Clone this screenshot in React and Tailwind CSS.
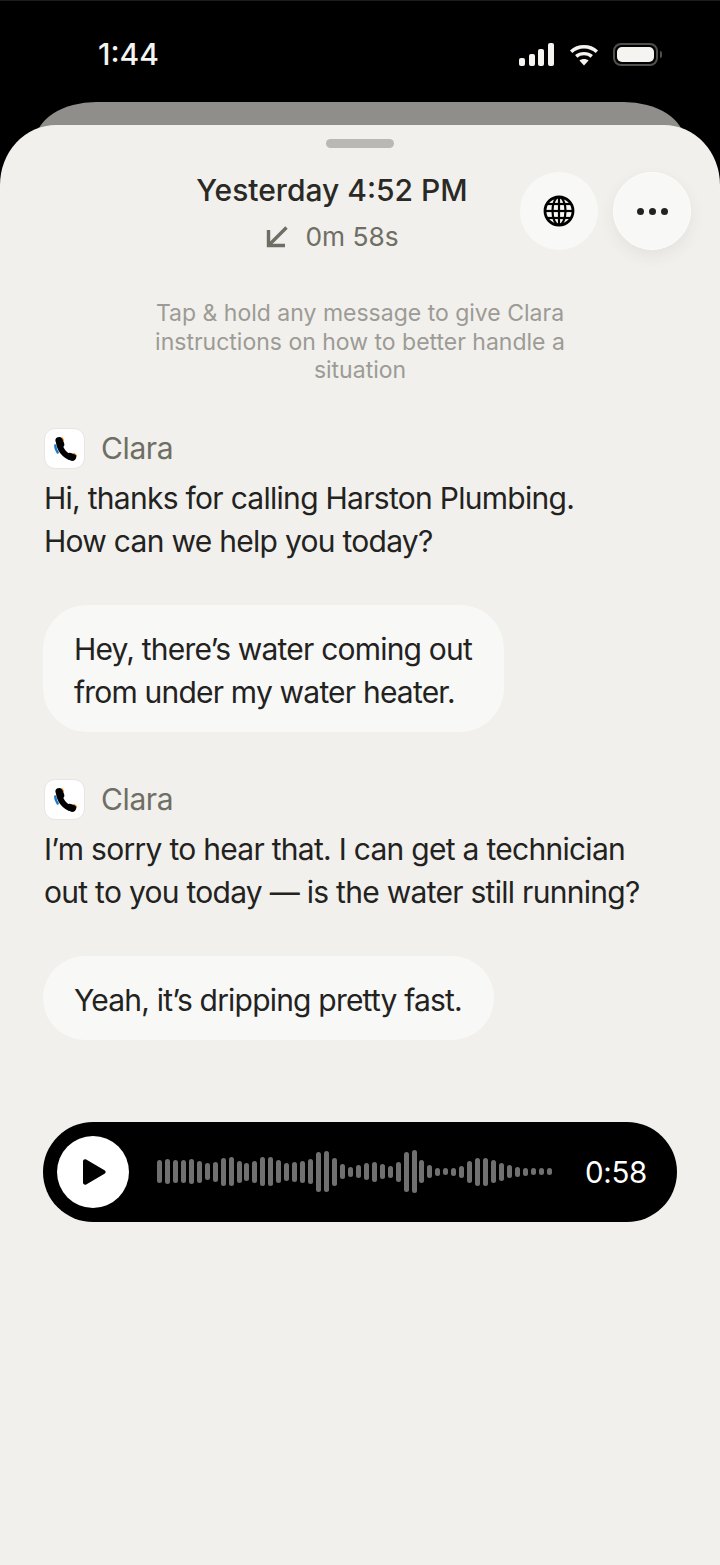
const bars = [23, 25, 23, 23, 25, 22, 17, 20, 28, 29, 22, 18, 22, 29, 29, 23, 18, 20, 22, 25, 40, 41, 28, 15, 10, 13, 17, 20, 15, 12, 20, 40, 43, 23, 13, 8, 7, 8, 12, 22, 28, 28, 23, 18, 13, 10, 8, 7, 7, 7];

function ClaraLabel() {
  return (
    <div className="flex items-center gap-4">
      <div className="flex h-[41px] w-[41px] items-center justify-center rounded-[11px] border border-[#e6e5e1] bg-white">
        <svg width="39" height="39" viewBox="0 0 40 40" fill="none" strokeLinecap="round">
          <path d="M10.5 17C10.5 19.5 11.5 22 13 24" stroke="#1d78c9" strokeWidth="2.5" />
          <path d="M17.5 9.5L18.5 11.5" stroke="#f0982c" strokeWidth="2" />
          <path d="M30 25.5L32 27.5" stroke="#f0982c" strokeWidth="2" />
          <path d="M14.5 13C14.5 20 20 28 28 29.5" stroke="#000" strokeWidth="6" />
          <path d="M14.5 12L16 15.5" stroke="#000" strokeWidth="7.5" />
          <path d="M25.5 28L28.5 29" stroke="#000" strokeWidth="7" />
        </svg>
      </div>
      <span className="text-[30px] leading-[41px] tracking-[-0.4px] text-[#6f6e64]">Clara</span>
    </div>
  );
}

function AgentMessage({ children }) {
  return (
    <div>
      <ClaraLabel />
      <p className="mt-2 text-[30px] leading-[43px] tracking-[-0.72px] text-[#23221e]">{children}</p>
    </div>
  );
}

function CallerBubble({ children }) {
  return (
    <div className="w-fit rounded-[44px] bg-[#f8f8f7] pb-[18px] pl-[31px] pr-[32px] pt-[23px] text-[30px] leading-[43px] tracking-[-0.8px] text-[#23221e]">
      {children}
    </div>
  );
}

export default function App() {
  return (
    <div className="flex h-[1565px] w-[720px] flex-col overflow-hidden bg-black font-['Inter',sans-serif]">
      {/* Status bar */}
      <div className="flex h-[102px] shrink-0 items-start justify-between border-t border-[#1c1c1c] pl-[98px] pr-[58px] pt-[35px]">
        <span className="text-[30px] font-medium leading-[36px] text-[#f5f4f0]">1:44</span>
        <div className="flex items-center pt-[7px]">
          <div className="flex h-[23px] items-end gap-[3.7px]">
            <div className="h-[8px] w-[6px] rounded-[2px] bg-[#f5f4f0]" />
            <div className="h-[12px] w-[6px] rounded-[2px] bg-[#f5f4f0]" />
            <div className="h-[17px] w-[6px] rounded-[2px] bg-[#f5f4f0]" />
            <div className="h-[23px] w-[6px] rounded-[2px] bg-[#f5f4f0]" />
          </div>
          <svg width="30" height="22" viewBox="0 0 32 24" fill="none" stroke="#f5f4f0" strokeWidth="3.8" className="ml-[15px]">
            <path d="M2 8.5C9.8 1.2 22.2 1.2 30 8.5" />
            <path d="M7.5 13.5C12.2 9.5 19.8 9.5 24.5 13.5" />
            <path d="M16 23.5L11 18C13.8 15.8 18.2 15.8 21 18Z" fill="#f5f4f0" stroke="none" />
          </svg>
          <div className="ml-[14px] flex items-center gap-[2px]">
            <div className="h-[23px] w-[45px] rounded-[8px] border-2 border-[#4f4f4b] p-[2px]">
              <div className="h-full w-full rounded-[5px] bg-[#f5f4f0]" />
            </div>
            <div className="h-[7px] w-[2px] rounded-r-full bg-[#4f4f4b]" />
          </div>
        </div>
      </div>

      {/* Card behind the sheet */}
      <div className="mx-[36px] h-[60px] shrink-0 rounded-t-[60px_38px] bg-[#8f8e8b]" />

      {/* Sheet */}
      <div className="relative -mt-[37px] flex-1 rounded-t-[56px_60px] bg-[#f1f0ec]">
        <div className="mx-auto mt-[14px] h-[9px] w-[68px] rounded-full bg-[#b9b8b4]" />

        <div className="mt-[24px] flex items-start pr-[29px]">
          <div className="flex-1 pl-[144px] text-center">
            <h1 className="text-[30px] font-medium leading-[36px] text-[#2a2925]">Yesterday 4:52 PM</h1>
            <div className="mt-[13px] flex items-center justify-center gap-[16px]">
              <svg width="24" height="24" viewBox="0 0 24 24" fill="none" stroke="#6f6e64" strokeWidth="3.4">
                <path d="M21.5 2.5L4 20" />
                <path d="M3.5 5V20.5H20" />
              </svg>
              <span className="text-[26.3px] leading-[32px] text-[#6f6e64]">0m 58s</span>
            </div>
          </div>
          <div className="flex gap-[15px]">
            <button className="flex h-[78px] w-[78px] items-center justify-center rounded-full bg-[#f8f8f7]">
              <svg width="32" height="32" viewBox="0 0 32 32" fill="none" stroke="#000" strokeWidth="2.2">
                <circle cx="16" cy="16" r="14" strokeWidth="2.8" />
                <ellipse cx="16" cy="16" rx="6.5" ry="14" />
                <path d="M16 2V30" />
                <path d="M2 16H30" />
                <path d="M4.5 9H27.5" />
                <path d="M4.5 23H27.5" />
              </svg>
            </button>
            <button className="flex h-[78px] w-[78px] items-center justify-center gap-[5px] rounded-full border border-[#fdfdfc] bg-[#f8f8f7] shadow-[0_6px_16px_rgba(60,60,50,0.07)]">
              <span className="h-[7px] w-[7px] rounded-full bg-[#23221e]" />
              <span className="h-[7px] w-[7px] rounded-full bg-[#23221e]" />
              <span className="h-[7px] w-[7px] rounded-full bg-[#23221e]" />
            </button>
          </div>
        </div>

        <p className="mx-auto mt-[46px] w-[440px] text-center text-[23px] leading-[28.5px] text-[#9c9b95]">
          Tap &amp; hold any message to give Clara instructions on how to better handle a situation
        </p>

        <div className="mt-[43px] pl-[44px] pr-[43px]">
          <AgentMessage>
            Hi, thanks for calling Harston Plumbing.
            <br />
            How can we help you today?
          </AgentMessage>
          <div className="-ml-px mt-[42px]">
            <CallerBubble>
              Hey, there’s water coming out
              <br />
              from under my water heater.
            </CallerBubble>
          </div>
          <div className="mt-[47px]">
            <AgentMessage>
              I’m sorry to hear that. I can get a technician
              <br />
              out to you today — is the water still running?
            </AgentMessage>
          </div>
          <div className="-ml-px mt-[42px]">
            <CallerBubble>Yeah, it’s dripping pretty fast.</CallerBubble>
          </div>

          {/* Recording player */}
          <div className="-ml-px mt-[82px] flex h-[100px] items-center rounded-full bg-black pl-[14px] pr-[30px]">
            <button className="flex h-[72px] w-[72px] shrink-0 items-center justify-center rounded-full bg-white">
              <svg width="26" height="28" viewBox="0 0 26 28" className="ml-[2px]">
                <path d="M2 3.5C2 1.8 3.7.8 5.2 1.6L23.5 12.2C25 13 25 15 23.5 15.8L5.2 26.4C3.7 27.2 2 26.2 2 24.5Z" fill="#000" />
              </svg>
            </button>
            <div className="ml-[28px] flex flex-1 items-center gap-[2.96px]">
              {bars.map((h, i) => (
                <div key={i} className="w-[5px] rounded-full bg-[#707070]" style={{ height: h }} />
              ))}
            </div>
            <span className="text-[29.5px] leading-[36px] tracking-[-0.3px] text-white">0:58</span>
          </div>
        </div>
      </div>
    </div>
  );
}
